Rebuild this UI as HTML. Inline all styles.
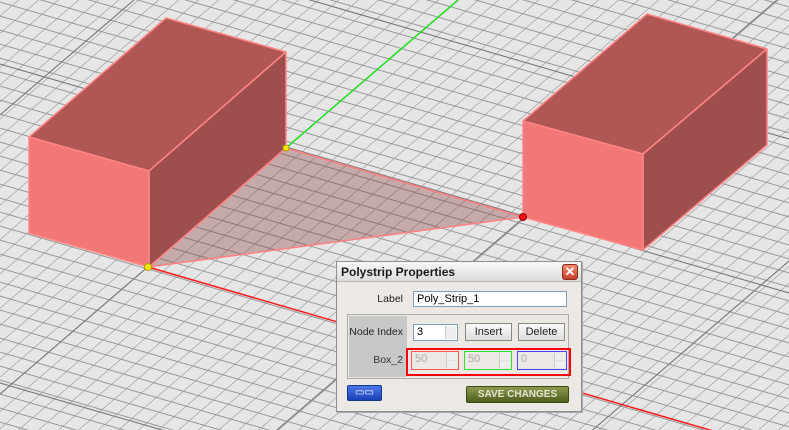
<!DOCTYPE html>
<html><head><meta charset="utf-8"><style>
*{margin:0;padding:0;box-sizing:border-box}
html,body{width:789px;height:430px;overflow:hidden}
body{background:#e6e6e6;position:relative;font-family:"Liberation Sans",Tahoma,sans-serif}
svg{position:absolute;left:0;top:0}
.dlg{position:absolute;left:336px;top:261px;width:246px;height:151px;background:#ece9e4;border:1px solid #8e8e92;box-shadow:1px 1px 0 #aaa;overflow:hidden}
.title{position:absolute;left:0;top:0;right:0;height:20px;background:linear-gradient(#f8f8f8,#dcdcdc);border-bottom:1px solid #b8b8b8}
.title span{position:absolute;left:4px;top:3px;font-size:12px;font-weight:bold;color:#1a1a1a}
.close{position:absolute;left:225px;top:2px;width:16px;height:16px;border:1px solid #8a2a1a;border-radius:3px;background:linear-gradient(#f08a70,#c8402a);color:#fff;font-size:13px;line-height:13px;text-align:center;font-weight:bold}
.t{position:absolute;font-size:10.5px;color:#222;text-align:right;width:66px;left:0;white-space:nowrap}
.inp{position:absolute;background:#fff;border:1px solid #7f9db9;font-size:11px;padding-left:3px;line-height:14px}
.grp{position:absolute;left:10px;top:52px;width:222px;height:65px;border:1px solid #aaa;background:#ece9e4}
.gl{position:absolute;left:1px;top:1px;width:58px;height:61px;background:#c8c8c8}
.btn{position:absolute;border:1px solid #888;background:linear-gradient(#fafafa,#dedede);font-size:11px;text-align:center;line-height:16px;color:#222}
.sp{position:absolute;right:1px;top:1px;width:11px;bottom:1px;border-left:1px solid #ccc;background:linear-gradient(#eee 48%,#aaa 50%,#eee 52%)}
.dis{position:absolute;background:#ece9e4;font-size:11px;color:#aaa;padding-left:3px;line-height:15px}
</style></head><body>
<svg width="789" height="430">
<defs>
<pattern id="pa" patternUnits="userSpaceOnUse" width="2000" height="14" y="1.6"><line x1="0" y1="0.5" x2="2000" y2="0.5" stroke="#959595" stroke-width="1"/></pattern>
<pattern id="pb" patternUnits="userSpaceOnUse" width="20" height="2000" x="18.1"><line x1="0.5" y1="0" x2="0.5" y2="2000" stroke="#959595" stroke-width="0.9"/></pattern>
</defs>
<g transform="matrix(1 0.29 0 1 0 0)"><rect x="0" y="-300" width="789" height="800" fill="url(#pa)"/></g>
<g transform="matrix(1 0 -1.163 1 0 0)"><rect x="0" y="0" width="1400" height="430" fill="url(#pb)"/></g>
<g stroke="#777" stroke-width="1.1">
<line x1="0" y1="-90" x2="789" y2="139"/>
<line x1="0" y1="64" x2="789" y2="293"/>
<line x1="0" y1="383" x2="789" y2="612"/>
<line x1="0" y1="115" x2="134" y2="0"/>
<line x1="0" y1="394" x2="458" y2="0"/>
<line x1="0" y1="668" x2="777" y2="0"/>
<line x1="0" y1="940" x2="789" y2="261"/>
</g>
<line x1="148" y1="267" x2="789" y2="453" stroke="#ff1a1a" stroke-width="1.5"/>
<line x1="286" y1="148" x2="458" y2="0" stroke="#22e022" stroke-width="1.5"/>
<polygon points="148,267 286,148 523,217" fill="rgba(130,50,50,0.33)" stroke="#ff8080" stroke-width="1.5"/>
<g stroke="#ff8585" stroke-width="1.5" stroke-linejoin="round">
<polygon points="29,137 166,18 286,52 149,171" fill="#b05756"/>
<polygon points="149,171 286,52 286,148 149,267" fill="#9f4e4e"/>
<polygon points="29,137 149,171 149,267 29,233" fill="#f27878"/>
<polygon points="523,121 647,14 767,49 643,154" fill="#b05756"/>
<polygon points="643,154 767,49 767,145 643,250" fill="#9f4e4e"/>
<polygon points="523,121 643,154 643,250 523,217" fill="#f27878"/>
</g>
<circle cx="148" cy="267" r="3.5" fill="#f4e800" stroke="#b0a000"/>
<circle cx="286" cy="148" r="3" fill="#f4e800" stroke="#b0a000"/>
<circle cx="523" cy="217" r="3.5" fill="#ee1111" stroke="#990000"/>
</svg>
<div class="dlg">
<div class="title"><span>Polystrip Properties</span><div class="close">✕</div></div>
<div class="t" style="top:31px">Label</div>
<div class="inp" style="left:76px;top:29px;width:154px;height:16px">Poly_Strip_1</div>
<div class="grp"><div class="gl"></div></div>
<div class="t" style="top:64px">Node Index</div>
<div class="inp" style="left:76px;top:62px;width:45px;height:17px;color:#000">3<div class="sp"></div></div>
<div class="btn" style="left:128px;top:61px;width:47px;height:18px">Insert</div>
<div class="btn" style="left:181px;top:61px;width:47px;height:18px">Delete</div>
<div class="t" style="top:92px;color:#333">Box_2</div>
<div style="position:absolute;left:69px;top:86px;width:165px;height:28px;border:2px solid #f00"></div>
<div class="dis" style="left:74px;top:89px;width:48px;height:19px;border:1px solid #f55">50<div class="sp"></div></div>
<div class="dis" style="left:127px;top:89px;width:48px;height:19px;border:1px solid #3d3">50<div class="sp"></div></div>
<div class="dis" style="left:180px;top:89px;width:50px;height:19px;border:1px solid #44f">0<div class="sp"></div></div>
<div style="position:absolute;left:10px;top:123px;width:35px;height:16px;border:1px solid #123a8a;border-radius:2px;background:linear-gradient(#4a78e8,#1a40b8);color:#fff;font-size:10px;text-align:center;line-height:14px">▭▭</div>
<div style="position:absolute;left:129px;top:124px;width:103px;height:17px;border:1px solid #3a4a10;border-radius:2px;background:linear-gradient(#8c9a50,#4e5e1c);color:#e4e4d0;font-size:10px;font-weight:bold;text-align:center;line-height:15px">SAVE CHANGES</div>
</div>
</body></html>
